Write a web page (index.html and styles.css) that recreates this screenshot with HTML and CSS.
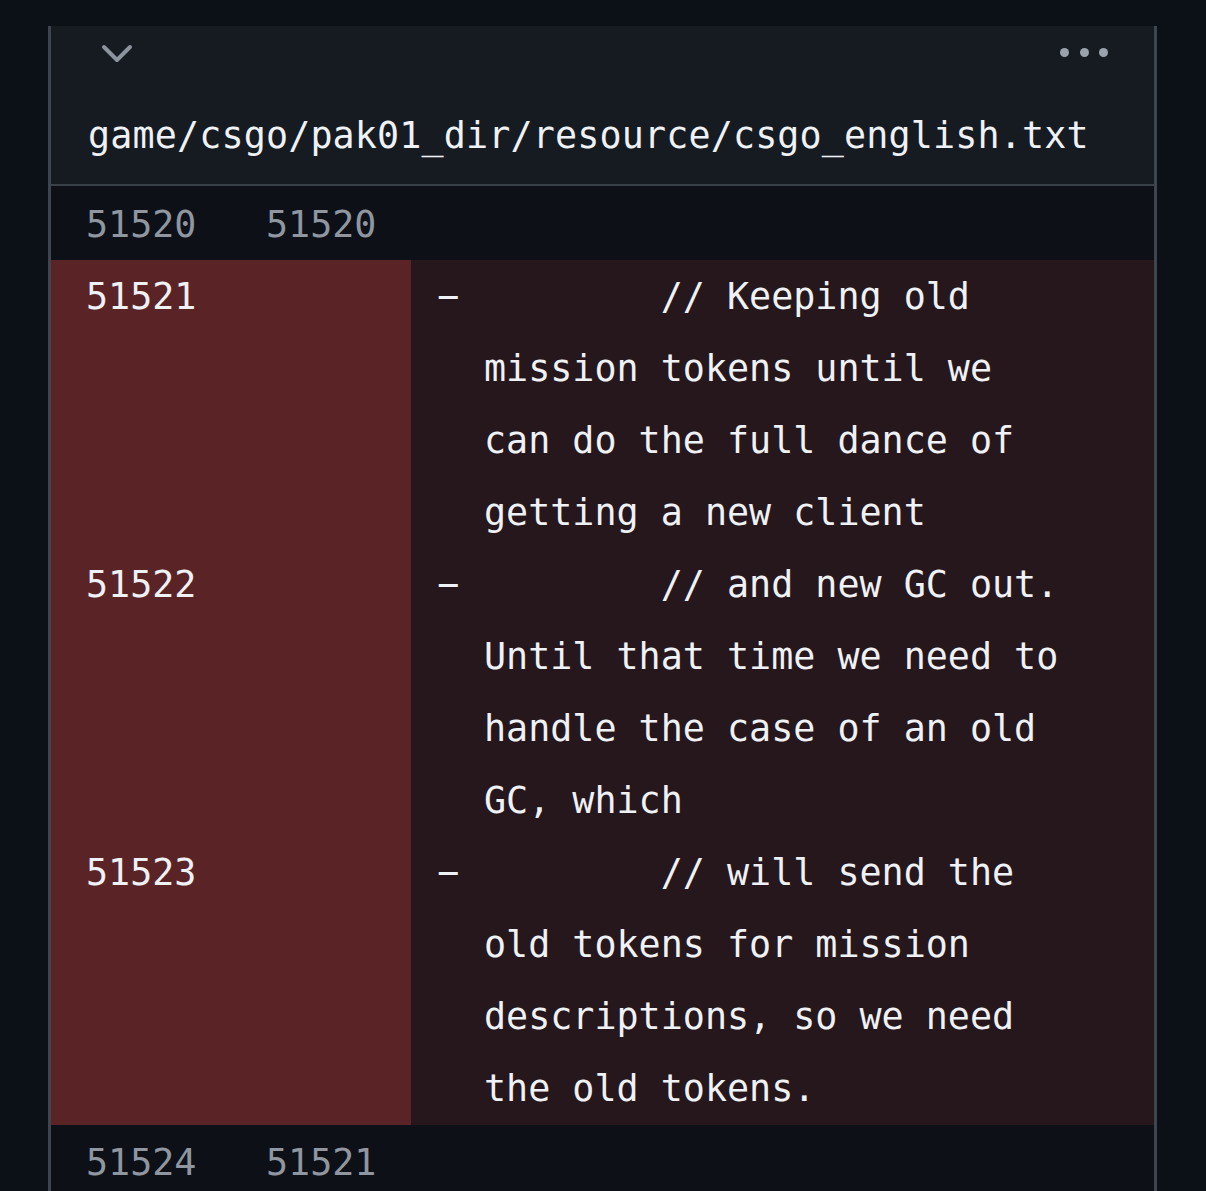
FILE: index.html
```html
<!DOCTYPE html>
<html lang="en">
<head>
<meta charset="utf-8">
<title>Diff</title>
<link rel="stylesheet" href="styles.css">
</head>
<body>
<div class="file">
  <div class="file-header">
    <div class="header-top">
      <svg class="chevron" width="32" height="22" viewBox="0 0 32 22">
        <path d="M3 4 L16 17 L29 4" fill="none" stroke="#8d939c" stroke-width="4" stroke-linecap="round" stroke-linejoin="round"/>
      </svg>
      <div class="dots"><span></span><span></span><span></span></div>
    </div>
    <div class="filename">game/csgo/pak01_dir/resource/csgo_english.txt</div>
  </div>
  <div class="diff">
    <div class="row ctx">
      <div class="num">51520</div>
      <div class="num">51520</div>
      <div class="code"></div>
    </div>
    <div class="row del">
      <div class="num">51521</div>
      <div class="num"></div>
      <div class="code"><span class="marker">−</span><span class="text">        // Keeping old mission tokens until we can do the full dance of getting a new client</span></div>
    </div>
    <div class="row del">
      <div class="num">51522</div>
      <div class="num"></div>
      <div class="code"><span class="marker">−</span><span class="text">        // and new GC out. Until that time we need to handle the case of an old GC, which</span></div>
    </div>
    <div class="row del">
      <div class="num">51523</div>
      <div class="num"></div>
      <div class="code"><span class="marker">−</span><span class="text">        // will send the old tokens for mission descriptions, so we need the old tokens.</span></div>
    </div>
    <div class="row ctx">
      <div class="num">51524</div>
      <div class="num">51521</div>
      <div class="code"></div>
    </div>
  </div>
</div>
</body>
</html>
```

FILE: styles.css
```css
html, body {
  margin: 0;
  padding: 0;
  background: #0c1017;
  height: 1191px;
  overflow: hidden;
}

.file {
  margin: 26px 0 0 48px;
  width: 1109px;
  box-sizing: border-box;
  border-left: 3px solid #3f454e;
  border-right: 3px solid #3f454e;
  font-family: "DejaVu Sans Mono", "Liberation Mono", monospace;
  font-size: 36.7px;
}

.file-header {
  background: #161b22;
  border-bottom: 2px solid #3a4048;
  height: 160px;
  box-sizing: border-box;
  display: flex;
  flex-direction: column;
}

.header-top {
  height: 56px;
  display: flex;
  align-items: center;
  justify-content: space-between;
  padding: 0 46px 0 50px;
  box-sizing: border-box;
}

.chevron {
  display: block;
}

.dots {
  display: flex;
  gap: 10.5px;
  margin-top: -4px;
}

.dots span {
  width: 9px;
  height: 9px;
  border-radius: 50%;
  background: #9ca2ab;
}

.filename {
  margin-top: 18px;
  padding-left: 37px;
  line-height: 72px;
  color: #eef1f5;
  white-space: nowrap;
  letter-spacing: 0.15px;
}

.diff {
  background: #0d1117;
}

.row {
  display: grid;
  grid-template-columns: 180px 180px 1fr;
}

.num {
  padding-left: 35px;
  box-sizing: border-box;
}

.ctx {
  height: 74px;
  box-sizing: border-box;
  padding-top: 4px;
  line-height: 70px;
  color: #8f96a0;
}

.del {
  line-height: 72px;
  color: #eef1f5;
}

.del .num,
.del .code {
  padding-top: 1px;
  margin-bottom: -1px;
}

.del .num {
  background: #5a2427;
}

.del .code {
  background: #26171c;
  display: flex;
  padding-left: 26px;
}

.marker {
  flex: none;
  width: 47px;
}

.text {
  width: 26.5ch;
  white-space: pre-wrap;
  word-break: normal;
}
```
